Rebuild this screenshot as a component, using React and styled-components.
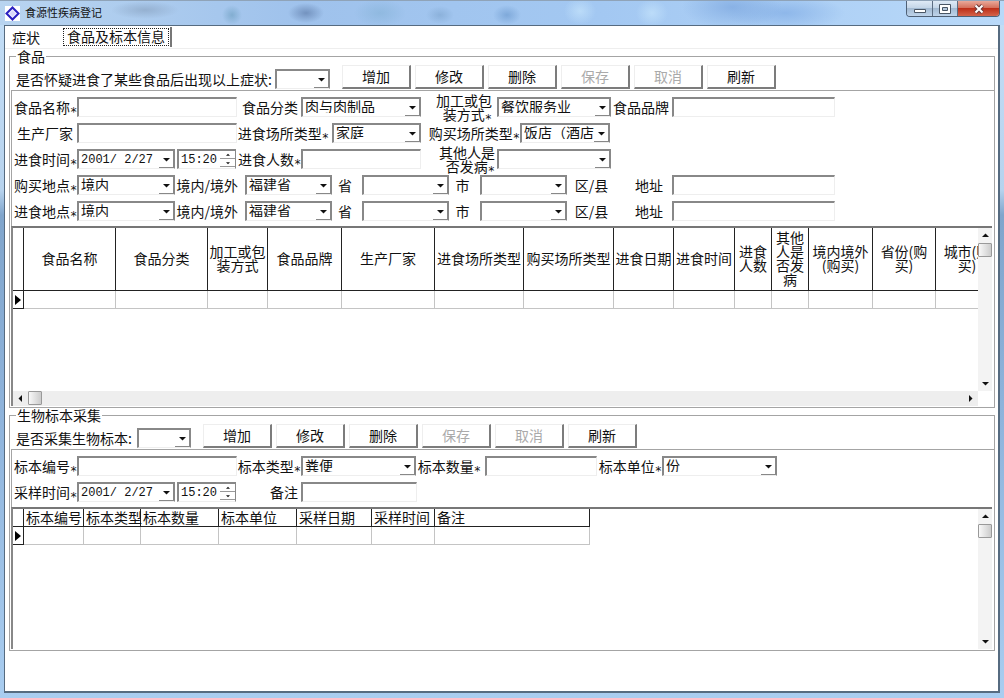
import * as React from 'react';
import styled, { createGlobalStyle } from 'styled-components';

const GlobalStyle = createGlobalStyle`
  * {
    box-sizing: border-box;
  }
  body {
    margin: 0;
  }
  body, button, input, select {
    font-family: 'Noto Sans CJK SC', 'Liberation Sans', sans-serif;
    font-size: 14px;
    line-height: 14px;
    color: #111;
  }
`;

const Window = styled.div`
  min-height: 100vh;
  display: flex;
  flex-direction: column;
  padding: 0 4px 5px 4px;
  background: linear-gradient(to bottom, #c3def7 0, #b7d3ee 190px, #80a5cc 215px, #8fb4dc 60%, #a9cdf0 100%);
`;

const TitleBar = styled.header`
  display: flex;
  align-items: center;
  height: 25px;
  margin: 0 -4px;
  padding-left: 5px;
  border-top: 1px solid #8fa3b8;
  background:
    radial-gradient(ellipse 10px 10px at 232px 14px, #6d9fc0a0, transparent),
    radial-gradient(ellipse 18px 10px at 306px 12px, #6583b0c0, transparent),
    radial-gradient(ellipse 34px 9px at 145px 9px, #8ba5c4b0, transparent),
    radial-gradient(ellipse 26px 14px at 380px 12px, #86b3d8a0, transparent),
    radial-gradient(ellipse 14px 9px at 440px 14px, #7fa6cfa0, transparent),
    radial-gradient(ellipse 14px 10px at 507px 14px, #6f9cd0b0, transparent),
    radial-gradient(ellipse 16px 14px at 580px 10px, #c3e2fbc0, transparent),
    radial-gradient(ellipse 16px 14px at 652px 12px, #c3e2fbc0, transparent),
    radial-gradient(ellipse 50px 22px at 732px 6px, #7fa9e0c0, transparent),
    radial-gradient(ellipse 60px 18px at 785px 12px, #84afe6c0, transparent),
    linear-gradient(to right, #b8d4f0, #9fc2ec 30%, #a3c8f2 60%, #b9d9f9);
`;

const Title = styled.h1`
  flex: 1;
  margin: 0 0 2px 5px;
  font-size: 11px;
  font-weight: 400;
  line-height: 14px;
`;

const WindowButtons = styled.div`
  align-self: flex-start;
  display: flex;
  height: 16px;
  margin-right: 4px;
  border: 1px solid #4f6075;
  border-top: 0;
  border-radius: 0 0 4px 4px;
  overflow: hidden;
`;

const WindowButton = styled.button`
  display: flex;
  align-items: center;
  justify-content: center;
  width: ${(props) => (props.$close ? 42 : 25)}px;
  padding: 0;
  border: 0;
  border-left: ${(props) => (props.$first ? 0 : '1px solid #5c6d82')};
  background: ${(props) =>
    props.$close
      ? 'linear-gradient(#e9a99a, #d4705c 45%, #bd2f19 50%, #d4634a)'
      : 'linear-gradient(#dfeaf6, #c5d6e8 45%, #a3bad2 50%, #bfd4ea)'};
`;

const Client = styled.main`
  flex: 1;
  display: flex;
  flex-direction: column;
  padding: 1px 3px 38px 4px;
  border: solid #566b80;
  border-width: 1px 2px 2px 1px;
  background: #fff;
`;

const Tabs = styled.nav`
  display: flex;
  align-items: flex-start;
  height: 22px;
  margin: 0 -3px 0 -4px;
  border-bottom: 1px solid #eee;
`;

const Tab = styled.button`
  padding: ${(props) => (props.$active ? '1px 1px 1px 1px' : '3px 22px 3px 7px')};
  border: 0;
  border-right: ${(props) => (props.$active ? '2px solid #777' : '0')};
  background: #fff;
`;

const TabFocus = styled.span`
  display: block;
  padding: 0 3px 2px;
  border: 1px dotted #222;
`;

const Group = styled.fieldset`
  display: flex;
  flex-direction: column;
  min-width: 0;
  margin: 0;
  padding: 0 0 1px 1px;
  border: 1px solid #a4a4a4;
`;

const Legend = styled.legend`
  margin-left: 5px;
  padding: 0 1px;
  line-height: 14px;
`;

const Toolbar = styled.div`
  display: flex;
  align-items: flex-end;
  height: 27px;
  padding: 0 0 1px 5px;
`;

const Buttons = styled.div`
  display: flex;
  gap: 4px;
  margin-left: 12px;
`;

const ActionButton = styled.button`
  width: 69px;
  height: 24px;
  padding: 0 0 1px;
  border: solid;
  border-width: 1px 2px 2px 1px;
  border-color: #eee #7c7c7c #7c7c7c #eee;
  background: #fff;

  &:disabled {
    color: #aaa;
  }
`;

const Form = styled.div`
  display: flex;
  flex-direction: column;
  gap: 6px;
  padding: 6px 0 5px 2px;
  border-top: 1px solid #a4a4a4;
  border-left: 1px solid #a4a4a4;
`;

const Row = styled.div`
  display: flex;
  align-items: center;
  height: 20px;
`;

const LabelBox = styled.label`
  flex: none;
  width: ${(props) => props.$width}px;
  padding: 0 ${(props) => props.$end || 0}px 1px 0;
  text-align: ${(props) => props.$align || 'left'};
  white-space: pre;
`;

const Star = styled.span`
  font-family: 'DejaVu Sans Mono', monospace;
  font-size: 12px;
  line-height: 0;
  vertical-align: -3px;
`;

const Input = styled.input`
  width: ${(props) => props.$width}px;
  height: 20px;
  padding: 0 2px;
  border: solid;
  border-width: 2px 1px 1px 2px;
  border-color: #888 #eee #eee #888;
  border-radius: 0;
  background: #fff;
  outline: 0;
`;

const SelectBox = styled.span`
  position: relative;
  display: block;
  flex: none;
  width: ${(props) => props.$width}px;
  height: 20px;
  border: solid;
  border-width: 2px 1px 1px 2px;
  border-color: #888 #888 #eee #888;
  background: #fff;
`;

const NativeSelect = styled.select`
  display: block;
  width: 100%;
  height: 17px;
  padding: 0 14px 3px 2px;
  border: 0;
  border-radius: 0;
  appearance: none;
  background: #fff;
  outline: 0;
`;

const DateText = styled.input`
  display: block;
  width: 100%;
  height: 17px;
  padding: 0 0 0 2px;
  border: 0;
  background: #fff;
  font-family: 'Liberation Mono', monospace;
  font-size: 12px;
  outline: 0;
`;

const arrowBox = `
  position: absolute;
  top: 0;
  right: 0;
  display: flex;
  align-items: center;
  justify-content: center;
  width: 15px;
  height: 17px;
  padding: 0;
  border: solid;
  border-width: 0 1px 1px 0;
  border-color: #888;
  background: #fff;
`;

const SelectArrow = styled.span`
  ${arrowBox}
  pointer-events: none;
`;

const DateArrow = styled.button`
  ${arrowBox}
`;

const Spinner = styled.span`
  position: absolute;
  top: 0;
  right: 0;
  display: flex;
  flex-direction: column;
  width: 15px;
`;

const SpinButton = styled.button`
  display: flex;
  align-items: center;
  justify-content: center;
  height: 8px;
  padding: 0;
  border: solid #999;
  border-width: 0 0 1px 0;
  background: #fff;
`;

const Spacer = styled.span`
  flex: none;
  width: ${(props) => props.$width}px;
`;

const GridFrame = styled.div`
  display: grid;
  grid-template-columns: minmax(0, 1fr) 14px;
  margin-right: 2px;
  border-top: 2px solid #777;
  border-left: 2px solid #888;
`;

const GridBody = styled.div`
  height: ${(props) => props.$height}px;
  overflow: hidden;
`;

const Table = styled.table`
  width: ${(props) => props.$width}px;
  table-layout: fixed;
  border-collapse: separate;
  border-spacing: 0;
`;

const HeadCell = styled.th`
  height: ${(props) => props.$height}px;
  padding: ${(props) => (props.$left ? '0 0 2px 2px' : '0 0 3px')};
  border: solid #222;
  border-width: 0 1px 1px 0;
  font-weight: 400;
  line-height: 14px;
  text-align: ${(props) => (props.$left ? 'left' : 'center')};
  white-space: ${(props) => (props.$left ? 'nowrap' : 'normal')};
`;

const Cell = styled.td`
  height: 18px;
  padding: 0;
  border: solid #c4c4c4;
  border-width: 0 1px 1px 0;
`;

const MarkerCell = styled.td`
  height: 18px;
  padding: 0 0 0 2px;
  border: solid #222;
  border-width: 0 1px 1px 0;
  line-height: 0;
`;

const ScrollBar = styled.div`
  display: flex;
  flex-direction: ${(props) => (props.$vertical ? 'column' : 'row')};
  height: ${(props) => (props.$vertical ? 'auto' : '15px')};
  background: ${(props) => (props.$vertical ? '#f3f3f3' : '#eee')};
`;

const ScrollButton = styled.button`
  display: flex;
  align-items: center;
  justify-content: center;
  width: 15px;
  height: 15px;
  padding: 0;
  border: 0;
  background: transparent;
`;

const Thumb = styled.div`
  width: 14px;
  height: 14px;
  border: 1px solid #999;
  border-radius: 1px;
  background: linear-gradient(to right, #f8f8f8, #ccc);
`;

const Fill = styled.div`
  flex: 1;
`;

const rotations = { down: 0, left: 90, up: 180, right: 270 };

function Triangle({ direction = 'down', size = 7 }) {
  return (
    <svg width={size} height={size} viewBox="0 0 7 7" aria-hidden="true">
      <path d="M0 2h7L3.5 5.5z" fill="#111" transform={`rotate(${rotations[direction]} 3.5 3.5)`} />
    </svg>
  );
}

function Label({ htmlFor, width, align, end, required, children }) {
  return (
    <LabelBox htmlFor={htmlFor} $width={width} $align={align} $end={end}>
      {children}
      {required && <Star>*</Star>}
    </LabelBox>
  );
}

function Select({ id, value = '', width }) {
  return (
    <SelectBox $width={width}>
      <NativeSelect id={id} defaultValue={value}>
        <option value={value}>{value}</option>
      </NativeSelect>
      <SelectArrow>
        <Triangle />
      </SelectArrow>
    </SelectBox>
  );
}

function DateTime({ id }) {
  return (
    <>
      <SelectBox $width={98}>
        <DateText id={id} defaultValue="2001/ 2/27" />
        <DateArrow aria-label="选择日期">
          <Triangle />
        </DateArrow>
      </SelectBox>
      <Spacer $width={2} />
      <SelectBox $width={59}>
        <DateText aria-label="时间" defaultValue="15:20" />
        <Spinner>
          <SpinButton aria-label="增大">
            <Triangle direction="up" size={4} />
          </SpinButton>
          <SpinButton aria-label="减小">
            <Triangle size={4} />
          </SpinButton>
        </Spinner>
      </SelectBox>
    </>
  );
}

function ActionButtons() {
  return (
    <Buttons>
      <ActionButton>增加</ActionButton>
      <ActionButton>修改</ActionButton>
      <ActionButton>删除</ActionButton>
      <ActionButton disabled>保存</ActionButton>
      <ActionButton disabled>取消</ActionButton>
      <ActionButton>刷新</ActionButton>
    </Buttons>
  );
}

function DataTable({ columns, headHeight, left }) {
  const width = columns.reduce((sum, column) => sum + column[1], 11);
  return (
    <Table $width={width}>
      <colgroup>
        <col style={{ width: 11 }} />
        {columns.map(([name, size]) => (
          <col key={name} style={{ width: size }} />
        ))}
      </colgroup>
      <thead>
        <tr>
          <HeadCell $height={headHeight} />
          {columns.map(([name]) => (
            <HeadCell key={name} $height={headHeight} $left={left}>
              {name}
            </HeadCell>
          ))}
        </tr>
      </thead>
      <tbody>
        <tr>
          <MarkerCell>
            <svg width="7" height="10" viewBox="0 0 7 10" aria-hidden="true">
              <path d="M0 0l6 5-6 5z" fill="#000" />
            </svg>
          </MarkerCell>
          {columns.map(([name]) => (
            <Cell key={name} />
          ))}
        </tr>
      </tbody>
    </Table>
  );
}

function VerticalScroll() {
  return (
    <ScrollBar $vertical>
      <ScrollButton aria-label="向上">
        <Triangle direction="up" />
      </ScrollButton>
      <Thumb />
      <Fill />
      <ScrollButton aria-label="向下">
        <Triangle />
      </ScrollButton>
    </ScrollBar>
  );
}

function PlaceRow({ id, label }) {
  return (
    <Row>
      <Label width={63} htmlFor={id} required>{label}</Label>
      <Select id={id} value="境内" width={98} />
      <Label width={70} end={7} align="right" htmlFor={`${id}-province`}>境内/境外</Label>
      <Select id={`${id}-province`} value="福建省" width={87} />
      <Label width={30} end={4} align="center" htmlFor={`${id}-city`}>省</Label>
      <Select id={`${id}-city`} width={87} />
      <Label width={31} end={4} align="center" htmlFor={`${id}-county`}>市</Label>
      <Select id={`${id}-county`} width={87} />
      <Label width={68} end={19} align="center" htmlFor={`${id}-county`}>区/县</Label>
      <Label width={37} htmlFor={`${id}-address`}>地址</Label>
      <Input id={`${id}-address`} $width={163} />
    </Row>
  );
}

const foodColumns = [
  ['食品名称', 92],
  ['食品分类', 92],
  ['加工或包装方式', 60],
  ['食品品牌', 74],
  ['生产厂家', 93],
  ['进食场所类型', 89],
  ['购买场所类型', 90],
  ['进食日期', 60],
  ['进食时间', 61],
  ['进食人数', 37],
  ['其他人是否发病', 37],
  ['境内境外(购买)', 64],
  ['省份(购买)', 63],
  ['城市(购买)', 63],
];

const sampleColumns = [
  ['标本编号', 60],
  ['标本类型', 57],
  ['标本数量', 78],
  ['标本单位', 78],
  ['采样日期', 75],
  ['采样时间', 63],
  ['备注', 155],
];

function FoodGroup() {
  return (
    <Group>
      <Legend>食品</Legend>
      <Toolbar>
        <Row>
          <Label width={259} htmlFor="suspect">是否怀疑进食了某些食品后出现以上症状:</Label>
          <Select id="suspect" width={55} />
        </Row>
        <ActionButtons />
      </Toolbar>
      <Form>
        <Row>
          <Label width={63} htmlFor="food-name" required>食品名称</Label>
          <Input id="food-name" $width={160} />
          <Label width={64} align="right" end={3} htmlFor="food-kind">食品分类</Label>
          <Select id="food-kind" value="肉与肉制品" width={120} />
          <Label width={76} align="right" end={5} htmlFor="process" required>{'加工或包\n装方式'}</Label>
          <Select id="process" value="餐饮服务业" width={114} />
          <Label width={61} align="right" end={3} htmlFor="brand">食品品牌</Label>
          <Input id="brand" $width={163} />
        </Row>
        <Row>
          <Label width={63} align="right" end={4} htmlFor="maker">生产厂家</Label>
          <Input id="maker" $width={160} />
          <Label width={95} align="right" end={3} htmlFor="eat-place" required>进食场所类型</Label>
          <Select id="eat-place" value="家庭" width={89} />
          <Label width={99} align="right" htmlFor="buy-place" required>购买场所类型</Label>
          <Select id="buy-place" value="饭店（酒店" width={90} />
        </Row>
        <Row>
          <Label width={63} htmlFor="eat-time" required>进食时间</Label>
          <DateTime id="eat-time" />
          <Spacer $width={2} />
          <Label width={63} htmlFor="eat-count" required>进食人数</Label>
          <Input id="eat-count" $width={120} />
          <Label width={76} align="right" end={2} htmlFor="others" required>{'其他人是\n否发病'}</Label>
          <Select id="others" width={114} />
        </Row>
        <PlaceRow id="buy-at" label="购买地点" />
        <PlaceRow id="eat-at" label="进食地点" />
      </Form>
      <GridFrame>
        <GridBody $height={163}>
          <DataTable columns={foodColumns} headHeight={63} />
        </GridBody>
        <VerticalScroll />
        <ScrollBar>
          <ScrollButton aria-label="向左">
            <Triangle direction="left" />
          </ScrollButton>
          <Thumb />
          <Fill />
          <ScrollButton aria-label="向右">
            <Triangle direction="right" />
          </ScrollButton>
        </ScrollBar>
      </GridFrame>
    </Group>
  );
}

function SampleGroup() {
  return (
    <Group>
      <Legend>生物标本采集</Legend>
      <Toolbar>
        <Row>
          <Label width={121} htmlFor="collect">是否采集生物标本:</Label>
          <Select id="collect" width={54} />
        </Row>
        <ActionButtons />
      </Toolbar>
      <Form>
        <Row>
          <Label width={63} htmlFor="sample-no" required>标本编号</Label>
          <Input id="sample-no" $width={160} />
          <Label width={64} align="right" htmlFor="sample-type" required>标本类型</Label>
          <Select id="sample-type" value="粪便" width={115} />
          <Label width={69} end={4} align="right" htmlFor="sample-count" required>标本数量</Label>
          <Input id="sample-count" $width={112} />
          <Label width={65} align="right" htmlFor="sample-unit" required>标本单位</Label>
          <Select id="sample-unit" value="份" width={115} />
        </Row>
        <Row>
          <Label width={63} htmlFor="sample-time" required>采样时间</Label>
          <DateTime id="sample-time" />
          <Label width={65} end={3} align="right" htmlFor="remark">备注</Label>
          <Input id="remark" $width={116} />
        </Row>
      </Form>
      <GridFrame>
        <GridBody $height={140}>
          <DataTable columns={sampleColumns} headHeight={18} left />
        </GridBody>
        <VerticalScroll />
      </GridFrame>
    </Group>
  );
}

function App() {
  return (
    <>
      <GlobalStyle />
      <Window>
        <TitleBar>
          <svg width="15" height="15" viewBox="0 0 15 15" aria-hidden="true">
            <path fill="#fff" d="M0 0h15v15H0z" />
            <path d="M7.5 1.5l6 6-6 6-6-6z" fill="#eef" stroke="#2a20c0" strokeWidth="2" />
            <path d="M7.5 4.5l3 3-3 3-3-3z" fill="#d9d8fa" />
          </svg>
          <Title>食源性疾病登记</Title>
          <WindowButtons>
            <WindowButton $first aria-label="最小化">
              <svg width="12" height="10" viewBox="0 0 12 10">
                <path d="M.5 5.5h11v3H.5z" fill="#fff" stroke="#4a5665" />
              </svg>
            </WindowButton>
            <WindowButton aria-label="最大化">
              <svg width="12" height="10" viewBox="0 0 12 10">
                <path d="M.5.5h11v9H.5z" fill="#fff" stroke="#4a5665" />
                <path d="M3.5 3.5h5v3h-5z" fill="#b4c8dc" stroke="#4a5665" />
              </svg>
            </WindowButton>
            <WindowButton $close aria-label="关闭">
              <svg width="12" height="10" viewBox="0 0 12 10">
                <path d="M2.5 1.5l7 7m0-7l-7 7" stroke="#6b3a3a" strokeWidth="4" />
                <path d="M2.5 1.5l7 7m0-7l-7 7" stroke="#fff" strokeWidth="2" />
              </svg>
            </WindowButton>
          </WindowButtons>
        </TitleBar>
        <Client>
          <Tabs>
            <Tab>症状</Tab>
            <Tab $active>
              <TabFocus>食品及标本信息</TabFocus>
            </Tab>
          </Tabs>
          <FoodGroup />
          <SampleGroup />
        </Client>
      </Window>
    </>
  );
}

export default App;
